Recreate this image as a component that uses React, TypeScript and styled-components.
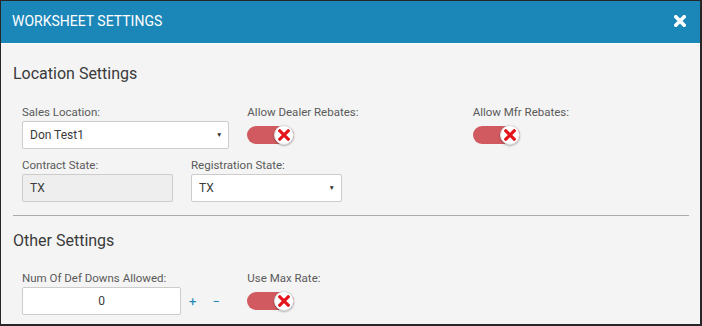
import React from 'react';
import styled, { createGlobalStyle } from 'styled-components';

const GlobalStyle = createGlobalStyle`
  html, body {
    margin: 0;
    padding: 0;
    background: #f4f4f4;
  }
  * {
    box-sizing: border-box;
  }
  body {
    font-family: Roboto, 'Liberation Sans', Arial, sans-serif;
  }
`;

const Modal = styled.div`
  width: 702px;
  height: 326px;
  border: 1px solid #262626;
  border-right-width: 2px;
  border-bottom-width: 2px;
  background: #f4f4f4;
  display: flex;
  flex-direction: column;
  overflow: hidden;
`;

const Header = styled.div`
  height: 43px;
  flex-shrink: 0;
  background: #1b87b9;
  border-bottom: 1px solid #fbfbfb;
  display: flex;
  align-items: center;
  justify-content: space-between;
  padding: 0 14px 3px 11px;
`;

const HeaderTitle = styled.h1`
  margin: 0;
  color: #fff;
  font-size: 14px;
  font-weight: 400;
  text-transform: uppercase;
`;

const CloseButton = styled.button`
  background: none;
  border: none;
  padding: 0;
  width: 12px;
  height: 12px;
  display: flex;
  align-items: center;
  justify-content: center;
  cursor: pointer;
`;

const Body = styled.div`
  padding: 20px 11px 0 12px;
`;

const SectionTitle = styled.h2`
  margin: 0;
  font-size: 16px;
  line-height: 20px;
  font-weight: 400;
  color: #3a3a3a;
`;

const Row = styled.div<{ $top: number }>`
  display: flex;
  margin-top: ${p => p.$top}px;
`;

const Col = styled.div<{ $span: number }>`
  width: ${p => (p.$span / 12) * 100}%;
  padding: 0 9px;
`;

const Label = styled.div`
  font-size: 11.5px;
  line-height: 14px;
  color: #5a5a5a;
  margin-bottom: 2px;
`;

const SelectBox = styled.div`
  height: 28px;
  background: #fff;
  border: 1px solid #ccc;
  border-radius: 2px;
  display: flex;
  align-items: center;
  justify-content: space-between;
  padding: 0 6px 0 7px;
  font-size: 12px;
  color: #3a3a3a;
`;

const Caret = styled.span`
  font-size: 6.5px;
  color: #333;
`;

const ReadOnlyBox = styled.div`
  height: 28px;
  background: #eee;
  border: 1px solid #ccc;
  border-radius: 2px;
  display: flex;
  align-items: center;
  padding: 0 7px;
  font-size: 12px;
  color: #3a3a3a;
`;

const NumberRow = styled.div`
  display: flex;
  align-items: center;
`;

const NumberBox = styled.div`
  width: 159px;
  height: 28px;
  background: #fff;
  border: 1px solid #ccc;
  border-radius: 2px;
  display: flex;
  align-items: center;
  justify-content: center;
  font-size: 12px;
  color: #3a3a3a;
`;

const StepButton = styled.button<{ $gap: number }>`
  background: none;
  border: none;
  padding: 0;
  margin-left: ${p => p.$gap}px;
  color: #1b87b9;
  font-family: Roboto, sans-serif;
  font-size: 13px;
  font-weight: 400;
  cursor: pointer;
`;

const ToggleField = styled.div`
  height: 28px;
  display: flex;
  align-items: center;
`;

const Track = styled.div<{ $on: boolean }>`
  position: relative;
  width: 47px;
  height: 18px;
  border-radius: 9px;
  background: ${p => (p.$on ? '#4caf50' : '#d05a5f')};
`;

const Knob = styled.div`
  position: absolute;
  right: 0;
  top: -1px;
  width: 20px;
  height: 20px;
  border-radius: 50%;
  background: #fff;
  border: 1px solid #ddd;
  box-shadow: 0 1px 2px rgba(0, 0, 0, 0.3);
  display: flex;
  align-items: center;
  justify-content: center;
`;

const Divider = styled.hr`
  border: none;
  border-top: 1px solid #aaa;
  margin: 13px 0 0 0;
`;

const XMark: React.FC<{ size: number; color: string; weight: number }> = ({ size, color, weight }) => (
  <svg width={size} height={size} viewBox="0 0 10 10">
    <path d="M1.5 1.5 L8.5 8.5 M8.5 1.5 L1.5 8.5" stroke={color} strokeWidth={weight} strokeLinecap="square" />
  </svg>
);

const Toggle: React.FC<{ on?: boolean }> = ({ on = false }) => (
  <ToggleField>
    <Track $on={on}>
      <Knob>
        <XMark size={12} color="#e3141b" weight={2.6} />
      </Knob>
    </Track>
  </ToggleField>
);

export default function App() {
  return (
    <>
      <GlobalStyle />
      <Modal>
        <Header>
          <HeaderTitle>Worksheet Settings</HeaderTitle>
          <CloseButton aria-label="close">
            <XMark size={12} color="#fff" weight={3} />
          </CloseButton>
        </Header>
        <Body>
          <SectionTitle>Location Settings</SectionTitle>
          <Row $top={21}>
            <Col $span={4}>
              <Label>Sales Location:</Label>
              <SelectBox>
                Don Test1
                <Caret>▼</Caret>
              </SelectBox>
            </Col>
            <Col $span={4}>
              <Label>Allow Dealer Rebates:</Label>
              <Toggle />
            </Col>
            <Col $span={4}>
              <Label>Allow Mfr Rebates:</Label>
              <Toggle />
            </Col>
          </Row>
          <Row $top={9}>
            <Col $span={3}>
              <Label>Contract State:</Label>
              <ReadOnlyBox>TX</ReadOnlyBox>
            </Col>
            <Col $span={3}>
              <Label>Registration State:</Label>
              <SelectBox>
                TX
                <Caret>▼</Caret>
              </SelectBox>
            </Col>
          </Row>
          <Divider />
          <Row $top={15}>
            <SectionTitle>Other Settings</SectionTitle>
          </Row>
          <Row $top={20}>
            <Col $span={4}>
              <Label>Num Of Def Downs Allowed:</Label>
              <NumberRow>
                <NumberBox>0</NumberBox>
                <StepButton $gap={8}>+</StepButton>
                <StepButton $gap={16}>−</StepButton>
              </NumberRow>
            </Col>
            <Col $span={4}>
              <Label>Use Max Rate:</Label>
              <Toggle />
            </Col>
          </Row>
        </Body>
      </Modal>
    </>
  );
}
